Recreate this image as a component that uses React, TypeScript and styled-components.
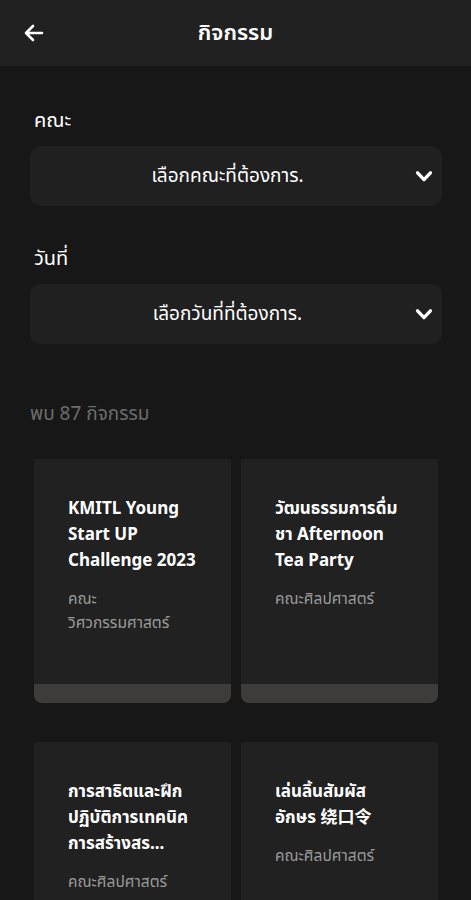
import styled, { createGlobalStyle } from "styled-components";

const Global = createGlobalStyle`
  html, body {
    margin: 0;
    padding: 0;
    background: #171717;
  }
  body {
    font-family: "Noto Sans", "Noto Sans Thai", "Noto Sans CJK SC", sans-serif;
    color: #fff;
  }
`;

const Page = styled.div`
  width: 471px;
  height: 900px;
  overflow: hidden;
  background: #171717;
`;

const Header = styled.header`
  height: 66px;
  background: #212121;
  display: grid;
  grid-template-columns: 66px 1fr 66px;
  align-items: center;
`;

const BackButton = styled.button`
  background: none;
  border: 0;
  padding: 0 0 0 22px;
  display: flex;
  align-items: center;
  color: #fff;
`;

const Title = styled.h1`
  margin: 0;
  text-align: center;
  font-size: 22px;
  font-weight: 600;
`;

const Body = styled.main`
  padding: 41px 29px 0 30px;
`;

const Label = styled.div`
  font-size: 20px;
  line-height: 26px;
  padding-left: 4px;
  margin-bottom: 13px;
`;

const Select = styled.div`
  height: 60px;
  border-radius: 10px;
  background: #202020;
  display: flex;
  align-items: center;
  margin-bottom: 39px;

  &:last-of-type {
    margin-bottom: 0;
  }
`;

const SelectText = styled.span`
  flex: 1;
  text-align: center;
  font-size: 19px;
  padding-left: 12px;
`;

const Chevron = styled.svg`
  width: 22px;
  height: 22px;
  margin-right: 7px;
`;

const Count = styled.div`
  font-size: 19px;
  line-height: 26px;
  color: #6c6c6c;
  margin: 56px 0 33px;
`;

const Grid = styled.div`
  display: grid;
  grid-template-columns: 197px 197px;
  column-gap: 10px;
  row-gap: 39px;
  padding-left: 4px;
`;

const Card = styled.div`
  height: 244px;
  background: #212121;
  border-radius: 2px 2px 8px 8px;
  display: flex;
  flex-direction: column;
  overflow: hidden;
`;

const CardBody = styled.div`
  flex: 1;
  padding: 36px 33px 0 34px;
`;

const CardTitle = styled.div`
  font-size: 17px;
  font-weight: 700;
  line-height: 26px;
`;

const CardMeta = styled.div`
  margin-top: 13px;
  font-size: 15.5px;
  line-height: 24px;
  color: #9a9a9a;
  white-space: pre-line;
`;

const CardFoot = styled.div`
  height: 19px;
  background: #3e3c3b;
`;

const cards = [
  { title: "KMITL Young Start UP Challenge 2023", faculty: "คณะ\nวิศวกรรมศาสตร์" },
  { title: "วัฒนธรรมการดื่มชา Afternoon Tea Party", faculty: "คณะศิลปศาสตร์" },
  { title: "การสาธิตและฝึกปฏิบัติการเทคนิคการสร้างสร...", faculty: "คณะศิลปศาสตร์" },
  { title: "เล่นลิ้นสัมผัสอักษร 绕口令", faculty: "คณะศิลปศาสตร์" },
];

function ChevronDown() {
  return (
    <Chevron viewBox="0 0 24 24" fill="none" stroke="#fff" strokeWidth={3.6} strokeLinecap="round" strokeLinejoin="round">
      <path d="M5 8.5l7 7.5 7-7.5" />
    </Chevron>
  );
}

export default function App() {
  return (
    <Page>
      <Global />
      <Header>
        <BackButton aria-label="back">
          <svg width="24" height="24" viewBox="0 0 24 24" fill="none" stroke="#fff" strokeWidth={2.6} strokeLinecap="round" strokeLinejoin="round">
            <path d="M20 12H4M11 5l-7 7 7 7" />
          </svg>
        </BackButton>
        <Title>กิจกรรม</Title>
        <div />
      </Header>
      <Body>
        <Label>คณะ</Label>
        <Select>
          <SelectText>เลือกคณะที่ต้องการ.</SelectText>
          <ChevronDown />
        </Select>
        <Label>วันที่</Label>
        <Select>
          <SelectText>เลือกวันที่ที่ต้องการ.</SelectText>
          <ChevronDown />
        </Select>
        <Count>พบ 87 กิจกรรม</Count>
        <Grid>
          {cards.map((c) => (
            <Card key={c.title}>
              <CardBody>
                <CardTitle>{c.title}</CardTitle>
                <CardMeta>{c.faculty}</CardMeta>
              </CardBody>
              <CardFoot />
            </Card>
          ))}
        </Grid>
      </Body>
    </Page>
  );
}
